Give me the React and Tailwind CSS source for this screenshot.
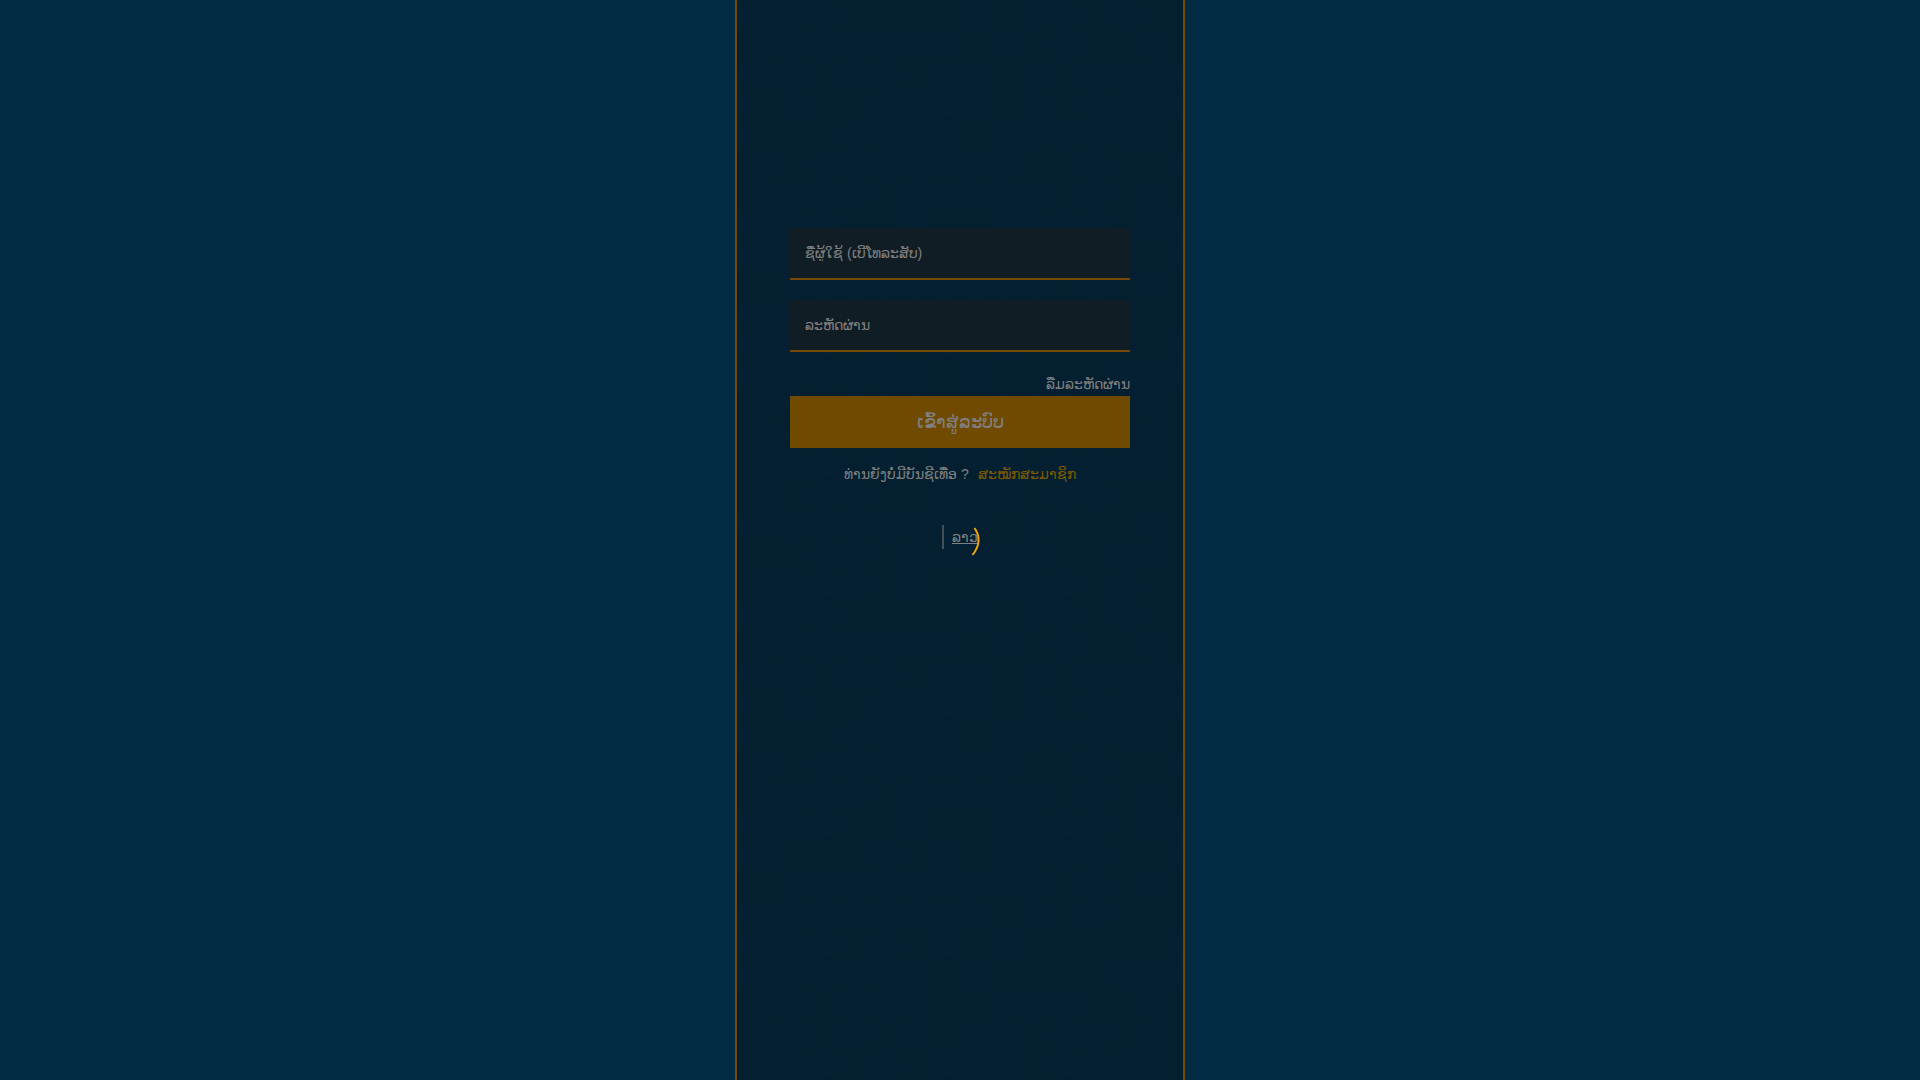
import React, { useState } from 'react';

// One row of the backdrop tile per entry, columns that hold a dot
const dotRows = [
  [0, 1, 2, 3, 8, 10, 11, 13],
  [1, 2, 3, 4, 5, 6, 7, 9, 11, 14],
  [0, 1, 2, 4, 5, 7, 8, 10, 12, 13, 14, 15],
  [0, 2, 5, 6, 7, 8, 10, 12, 13, 14, 15],
  [0, 4, 5, 6, 7, 9, 10, 11, 12, 13, 14],
  [1, 3, 4, 5, 6, 7, 8, 9, 12, 15],
  [1, 2, 3, 4, 6, 7, 8, 9, 10, 12, 14],
  [0, 1, 2, 3, 6, 9, 10, 11, 12, 14, 15],
  [0, 1, 5, 7, 9, 10, 11, 12, 15],
  [2, 3, 4, 5, 6, 7, 8, 9, 10, 12, 14],
  [0, 1, 2, 3, 4, 5, 6, 7, 8, 10, 12],
  [0, 1, 2, 3, 5, 7, 9, 15],
  [0, 1, 2, 3, 4, 5, 6, 8, 13, 14, 15],
  [1, 2, 4, 5, 6, 9, 10, 11, 14],
  [1, 2, 4, 6, 8, 9, 11, 12, 14],
  [1, 2, 3, 5, 7, 8, 9, 11, 12, 13, 14],
  [1, 3, 4, 7, 8, 9, 11, 12],
  [0, 1, 2, 3, 4, 5, 6, 7, 8, 10, 14],
  [3, 4, 6, 7, 8, 9, 10, 13, 14],
  [1, 2, 3, 4, 6, 9, 10, 11, 13],
];

const DotBackdrop = () => (
  <svg className="absolute inset-0 w-full h-full" aria-hidden="true">
    <defs>
      <pattern id="dots" width="480" height="600" patternUnits="userSpaceOnUse">
        {dotRows.map((cols, row) =>
          cols.map(col => (
            <circle key={`${row}-${col}`} cx={col * 30 - 2} cy={row * 30 + 15} r="12" fill="#042032" />
          ))
        )}
      </pattern>
    </defs>
    <rect width="100%" height="100%" fill="url(#dots)" />
  </svg>
);

const Field = ({ id, label, type, value, onChange }) => (
  <div>
    <label htmlFor={id} className="sr-only">{label}</label>
    <input
      id={id}
      type={type}
      value={value}
      onChange={e => onChange(e.target.value)}
      placeholder={label}
      className="block w-full h-[52px] px-[15px] text-sm text-[#808080] placeholder:text-[#808080] bg-[#111d25] border-b-2 border-[#734a00] outline-none"
    />
  </div>
);

const Spinner = () => (
  <div className="fixed inset-0 flex items-center justify-center pointer-events-none" role="status">
    <svg className="w-10 h-10" viewBox="0 0 40 40" fill="none">
      <path d="M34.5 8 Q43.5 21 32.5 35" stroke="#f0a30a" strokeWidth="2" />
    </svg>
  </div>
);

const App = () => {
  const [username, setUsername] = useState('');
  const [password, setPassword] = useState('');

  return (
    <div className="min-h-screen flex justify-center bg-[#022c43] font-['Arial','Liberation_Sans',sans-serif] text-sm text-[#808080]">
      <main className="relative w-full max-w-[450px] min-h-screen border-x-2 border-[#734a00] bg-[#031f30]">
        <DotBackdrop />
        <form onSubmit={e => e.preventDefault()} className="relative px-[53px] pt-57">
          <div className="flex flex-col gap-5">
            <Field id="username" label="ຊື່ຜູ້ໃຊ້ (ເບີໂທລະສັບ)" type="text" value={username} onChange={setUsername} />
            <Field id="password" label="ລະຫັດຜ່ານ" type="password" value={password} onChange={setPassword} />
          </div>
          <div className="mt-5 text-right leading-6">
            <a href="#forgot">ລືມລະຫັດຜ່ານ</a>
          </div>
          <button type="submit" className="block w-full h-[52px] bg-[#704a00] text-lg">
            ເຂົ້າສູ່ລະບົບ
          </button>
          <p className="mt-4 flex justify-center gap-[9px] leading-5">
            <span>ທ່ານຍັງບໍ່ມີບັນຊີເທື່ອ ?</span>
            <a href="#register" className="text-[#805a00]">ສະໝັກສະມາຊິກ</a>
          </p>
          <div className="mt-[41px] flex justify-center">
            <div className="border-l-2 border-[#414f59] pl-2 leading-6">
              <a href="#lao" className="underline">ລາວ</a>
            </div>
          </div>
        </form>
      </main>
      <Spinner />
    </div>
  );
};

export default App;
